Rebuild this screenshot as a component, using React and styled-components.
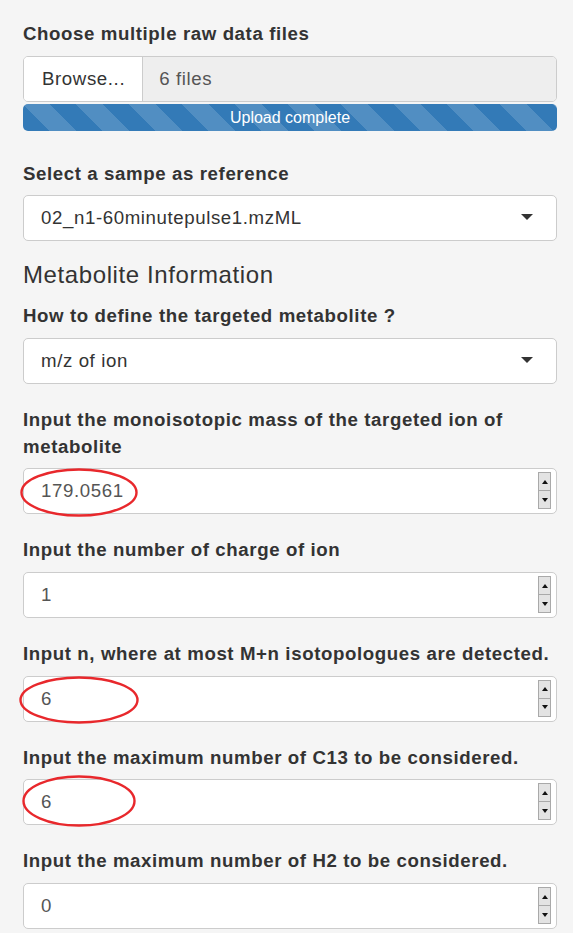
import React from "react";
import styled, { createGlobalStyle } from "styled-components";

const GlobalStyle = createGlobalStyle`
  html, body {
    margin: 0;
    padding: 0;
    background: #f5f5f5;
  }
  body {
    font-family: "Liberation Sans", Arial, sans-serif;
    color: #333;
    letter-spacing: 0.6px;
  }
  * {
    box-sizing: border-box;
  }
`;

const numericFields = [
  {
    label: "Input the monoisotopic mass of the targeted ion of metabolite",
    value: "179.0561",
    mark: { x: -4, y: -1, w: 118, h: 49 },
  },
  { label: "Input the number of charge of ion", value: "1" },
  {
    label: "Input n, where at most M+n isotopologues are detected.",
    value: "6",
    mark: { x: -5, y: -1, w: 120, h: 48 },
  },
  {
    label: "Input the maximum number of C13 to be considered.",
    value: "6",
    mark: { x: -2, y: -5, w: 114, h: 52 },
  },
  { label: "Input the maximum number of H2 to be considered.", value: "0" },
];

const App = () => {
  return (
    <Panel>
      <GlobalStyle />
      <FormGroup $mb={30}>
        <Label>Choose multiple raw data files</Label>
        <FileRow>
          <BrowseButton type="button">Browse...</BrowseButton>
          <FileName>6 files</FileName>
        </FileRow>
        <Progress>Upload complete</Progress>
      </FormGroup>

      <FormGroup>
        <Label>Select a sampe as reference</Label>
        <SelectBox>
          <span>02_n1-60minutepulse1.mzML</span>
          <Caret />
        </SelectBox>
      </FormGroup>

      <SectionTitle>Metabolite Information</SectionTitle>

      <FormGroup>
        <Label>How to define the targeted metabolite ?</Label>
        <SelectBox>
          <span>m/z of ion</span>
          <Caret />
        </SelectBox>
      </FormGroup>

      {numericFields.map((f) => (
        <FormGroup key={f.label}>
          <Label>{f.label}</Label>
          <NumberField>
            <NumberInput type="text" defaultValue={f.value} readOnly />
            <Spinner>
              <SpinButton $dir="up" />
              <SpinButton $dir="down" />
            </Spinner>
            {f.mark && (
              <Mark
                $x={f.mark.x}
                $y={f.mark.y}
                $w={f.mark.w}
                $h={f.mark.h}
                viewBox={`0 0 ${f.mark.w} ${f.mark.h}`}
              >
                <ellipse
                  cx={f.mark.w / 2}
                  cy={f.mark.h / 2}
                  rx={f.mark.w / 2 - 1.5}
                  ry={f.mark.h / 2 - 1.5}
                  fill="none"
                  stroke="#e8282c"
                  strokeWidth="2.4"
                />
              </Mark>
            )}
          </NumberField>
        </FormGroup>
      ))}
    </Panel>
  );
};

export default App;

const Panel = styled.div`
  padding: 21px 16px 0 23px;
  background: #f5f5f5;
  min-height: 933px;
`;

const FormGroup = styled.div`
  margin-bottom: ${(p) => (p.$mb != null ? p.$mb : 23)}px;
`;

const Label = styled.label`
  display: block;
  font-weight: 700;
  font-size: 18.67px;
  line-height: 26.67px;
  color: #333;
  margin-bottom: 8px;
`;

const FileRow = styled.div`
  display: flex;
  height: 46px;
  border: 1px solid #ccc;
  border-radius: 5px;
  overflow: hidden;
`;

const BrowseButton = styled.button`
  display: flex;
  align-items: center;
  padding: 0 17px 0 18px;
  background: #fff;
  border: none;
  border-right: 1px solid #ccc;
  font-family: "Liberation Sans", Arial, sans-serif;
  font-size: 18.67px;
  letter-spacing: 0.6px;
  color: #333;
`;

const FileName = styled.div`
  flex: 1;
  display: flex;
  align-items: center;
  padding-left: 16px;
  background: #eee;
  font-size: 18.67px;
  color: #555;
`;

const Progress = styled.div`
  height: 27px;
  margin-top: 2px;
  border-radius: 5px;
  background-color: #337ab7;
  background-image: linear-gradient(
    45deg,
    rgba(255, 255, 255, 0.15) 25%,
    transparent 25%,
    transparent 50%,
    rgba(255, 255, 255, 0.15) 50%,
    rgba(255, 255, 255, 0.15) 75%,
    transparent 75%,
    transparent
  );
  background-size: 53px 53px;
  color: #fff;
  font-size: 16px;
  letter-spacing: 0;
  line-height: 27px;
  text-align: center;
`;

const SectionTitle = styled.h4`
  margin: 0 0 17px;
  font-weight: 400;
  font-size: 24px;
  line-height: 22px;
  color: #333;
`;

const SelectBox = styled.div`
  display: flex;
  align-items: center;
  justify-content: space-between;
  height: 46px;
  padding: 0 23px 0 17px;
  background: #fff;
  border: 1px solid #ccc;
  border-radius: 5px;
  font-size: 18.67px;
  color: #333;
`;

const Caret = styled.span`
  width: 0;
  height: 0;
  margin-top: -2px;
  border-left: 6.67px solid transparent;
  border-right: 6.67px solid transparent;
  border-top: 6.67px solid #333;
`;

const NumberField = styled.div`
  position: relative;
  display: flex;
  align-items: center;
  height: 46px;
  padding: 0 5px 0 17px;
  background: #fff;
  border: 1px solid #ccc;
  border-radius: 5px;
`;

const NumberInput = styled.input`
  flex: 1;
  min-width: 0;
  border: none;
  outline: none;
  padding: 0;
  background: transparent;
  font-family: "Liberation Sans", Arial, sans-serif;
  font-size: 18.67px;
  letter-spacing: 0.6px;
  color: #555;
`;

const Spinner = styled.div`
  display: flex;
  flex-direction: column;
  align-self: flex-start;
  margin-top: 3px;
  width: 13px;
  height: 37px;
  border: 1px solid #a9a9a9;
  background: #e3e3e3;
`;

const SpinButton = styled.div`
  flex: 1;
  display: flex;
  align-items: center;
  justify-content: center;
  & + & {
    border-top: 1px solid #a9a9a9;
  }
  &::after {
    content: "";
    width: 0;
    height: 0;
    border-left: 3.5px solid transparent;
    border-right: 3.5px solid transparent;
    ${(p) =>
      p.$dir === "up"
        ? "border-bottom: 4px solid #111;"
        : "border-top: 4px solid #111;"}
  }
`;

const Mark = styled.svg`
  position: absolute;
  left: ${(p) => p.$x}px;
  top: ${(p) => p.$y}px;
  width: ${(p) => p.$w}px;
  height: ${(p) => p.$h}px;
  overflow: visible;
  pointer-events: none;
`;
